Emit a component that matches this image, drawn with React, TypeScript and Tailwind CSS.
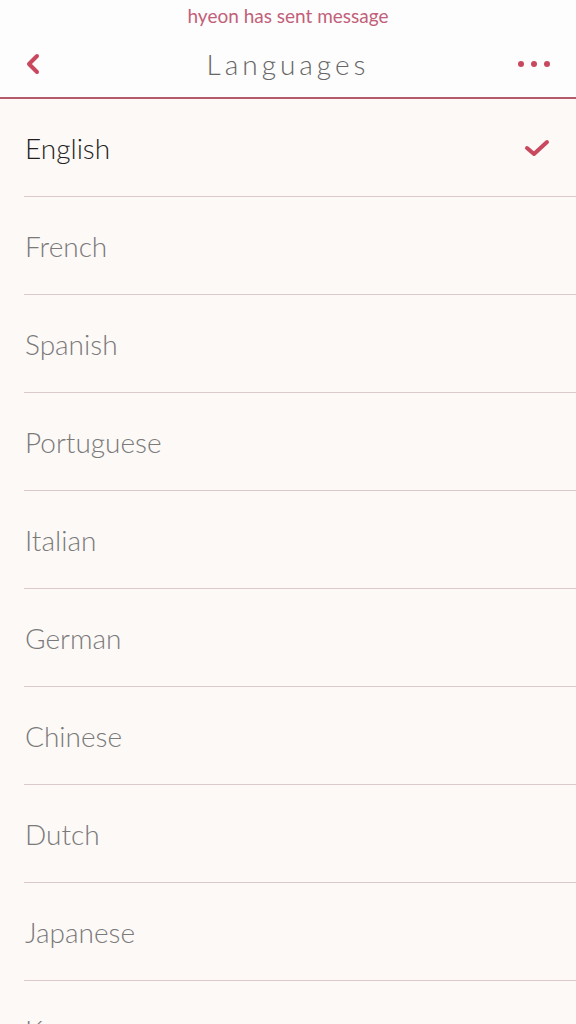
import React from 'react';

const languages = ['English', 'French', 'Spanish', 'Portuguese', 'Italian', 'German', 'Chinese', 'Dutch', 'Japanese', 'Korean'];

const App: React.FC = () => {
  const selected = 'English';

  return (
    <div className="h-[1024px] w-[576px] overflow-hidden bg-[#fdf9f7] font-['Lato',sans-serif]">
      {/* status banner */}
      <div className="flex h-[32px] items-center justify-center bg-[#fdfdfd] text-[19px] text-[#c2607a]">
        hyeon has sent message
      </div>

      {/* header */}
      <div className="relative flex h-[67px] items-center justify-between border-b-2 border-[#b65a6b] bg-[#fdfdfd] px-[24px] pb-[1px]">
        <svg width="16" height="24" viewBox="0 0 16 24" className="ml-[1px]">
          <path d="M12 4 L4 12 L12 20" fill="none" stroke="#c8485e" strokeWidth="4" strokeLinecap="round" strokeLinejoin="round" />
        </svg>
        <h1 className="absolute left-1/2 -translate-x-1/2 text-[28px] font-light tracking-[4px] text-[#666]">Languages</h1>
        <div className="mr-[2px] flex gap-[7px]">
          <span className="h-[6px] w-[6px] rounded-full bg-[#c8485e]" />
          <span className="h-[6px] w-[6px] rounded-full bg-[#c8485e]" />
          <span className="h-[6px] w-[6px] rounded-full bg-[#c8485e]" />
        </div>
      </div>

      {/* list */}
      <ul className="pl-[24px]">
        {languages.map((lang) => (
          <li key={lang} className="flex h-[98px] items-center justify-between border-b border-[#dcc9c9] pr-[26px]">
            <span className={`pl-[1px] text-[28px] font-light ${lang === selected ? 'text-[#1f1f1f]' : 'text-[#7a7a7a]'}`}>{lang}</span>
            {lang === selected && (
              <svg width="26" height="20" viewBox="0 0 26 20">
                <path d="M3 10 L10 16 L23 4" fill="none" stroke="#c8485e" strokeWidth="4" strokeLinecap="round" strokeLinejoin="round" />
              </svg>
            )}
          </li>
        ))}
      </ul>
    </div>
  );
};

export default App;
